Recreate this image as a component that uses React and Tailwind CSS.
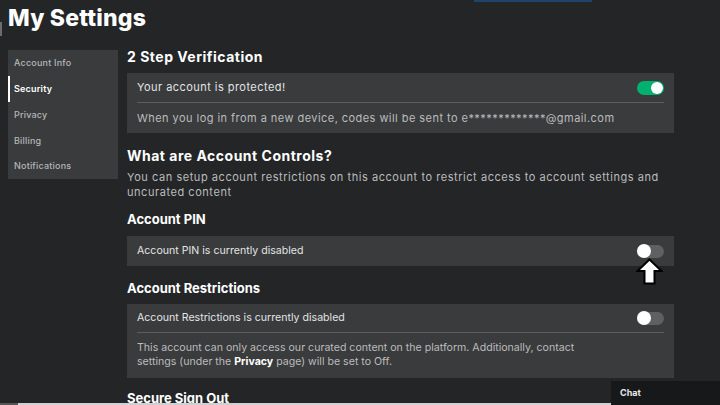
import React from 'react';

const font = { fontFamily: 'Inter, "Noto Sans", sans-serif' };

function Toggle({ on }) {
  if (on) {
    return (
      <div className="w-[27px] h-[14px] rounded-full bg-[#00b06f] flex items-center justify-end pr-[1px]">
        <div className="w-[12px] h-[12px] rounded-full bg-white" />
      </div>
    );
  }
  return (
    <div className="w-[27px] h-[13px] rounded-full bg-[#5e6062] flex items-center">
      <div className="w-[14px] h-[14px] rounded-full bg-white" />
    </div>
  );
}

function Arrow() {
  return (
    <svg className="absolute left-[-1px] top-[13px]" width="27" height="27" viewBox="0 0 27 27">
      <polygon
        points="13.5,1.5 25.5,13 18.5,13 18.5,25.5 8.5,25.5 8.5,13 1.5,13"
        fill="#ffffff"
        stroke="#000000"
        strokeWidth="2"
        strokeLinejoin="miter"
      />
    </svg>
  );
}

const menu = ['Account Info', 'Security', 'Privacy', 'Billing', 'Notifications'];

export default function App() {
  return (
    <div className="relative w-[720px] h-[405px] overflow-hidden bg-[#232527] text-white" style={font}>
      {/* top strip bits */}
      <div className="absolute left-[474px] top-0 w-[118px] h-[2px] bg-[#1d4569]" />
      <div className="absolute left-0 top-[22px] w-[2px] h-[14px] bg-[#6a6c6e]" />

      <h1 className="pl-[8px] pt-[4px] text-[23px] leading-[28px] font-extrabold tracking-[0.2px]">My Settings</h1>

      <div className="flex mt-[16px]">
        {/* sidebar */}
        <div className="ml-[8px] mt-[2px] w-[110px] h-[129px] bg-[#393b3d] self-start">
          {menu.map(item => (
            <div key={item} className="relative h-[25.8px] flex items-center pl-[6px]">
              {item === 'Security' && <div className="absolute left-0 top-0 w-[2px] h-full bg-white" />}
              <span className={item === 'Security' ? 'text-[9px] tracking-[0.2px] font-semibold text-white' : 'text-[9px] tracking-[0.2px] font-medium text-[#b5b7b9]'}>
                {item}
              </span>
            </div>
          ))}
        </div>

        {/* main */}
        <div className="ml-[9px] w-[547px]">
          <h2 className="text-[14px] leading-[18px] font-bold tracking-[0.5px]">2 Step Verification</h2>
          <div className="mt-[7px] bg-[#393b3d] px-[10px] tracking-[0.45px]">
            <div className="h-[29px] flex items-center justify-between">
              <span className="text-[11px] text-[#e4e4e4]">Your account is protected!</span>
              <Toggle on />
            </div>
            <div className="h-[1px] bg-[#5c5e60]" />
            <div className="h-[30px] flex items-center">
              <span className="text-[11px] text-[#bcbcbc]">When you log in from a new device, codes will be sent to e*************@gmail.com</span>
            </div>
          </div>

          <h2 className="mt-[14px] text-[14px] leading-[18px] font-bold tracking-[0.5px]">What are Account Controls?</h2>
          <p className="mt-[5px] text-[11px] leading-[15px] tracking-[0.55px] text-[#bcbcbc]">
            You can setup account restrictions on this account to restrict access to account settings and
            <br />
            uncurated content
          </p>

          <h2 className="mt-[10px] text-[13px] leading-[18px] font-bold">Account PIN</h2>
          <div className="mt-[8px] bg-[#393b3d] px-[10px] h-[30px] flex items-center justify-between">
            <span className="text-[10.6px] text-[#e4e4e4]">Account PIN is currently disabled</span>
            <div className="relative">
              <Toggle />
              <Arrow />
            </div>
          </div>

          <h2 className="mt-[13px] text-[13px] leading-[18px] font-bold">Account Restrictions</h2>
          <div className="mt-[7px] bg-[#393b3d] px-[10px] pb-[9px]">
            <div className="h-[28px] flex items-center justify-between">
              <span className="text-[10.6px] text-[#e4e4e4]">Account Restrictions is currently disabled</span>
              <Toggle />
            </div>
            <div className="h-[1px] bg-[#5c5e60]" />
            <p className="mt-[8px] text-[10.6px] leading-[14px] text-[#bcbcbc]">
              This account can only access our curated content on the platform. Additionally, contact
              <br />
              settings (under the <b className="font-bold text-white">Privacy</b> page) will be set to Off.
            </p>
          </div>

          <h2 className="mt-[11px] text-[13px] leading-[18px] font-bold">Secure Sign Out</h2>
        </div>
      </div>

      {/* chat */}
      <div className="absolute right-0 bottom-0 w-[109px] h-[24px] bg-[#17181a] pl-[9px] flex items-center">
        <span className="text-[9px] font-bold text-[#e8e8e8]">Chat</span>
      </div>
      {/* scrollbar */}
      <div className="absolute left-0 bottom-0 w-[611px] h-[2px] flex">
        <div className="w-[18px] bg-[#555]" />
        <div className="flex-1 bg-[#cfd0d1]" />
      </div>
    </div>
  );
}
